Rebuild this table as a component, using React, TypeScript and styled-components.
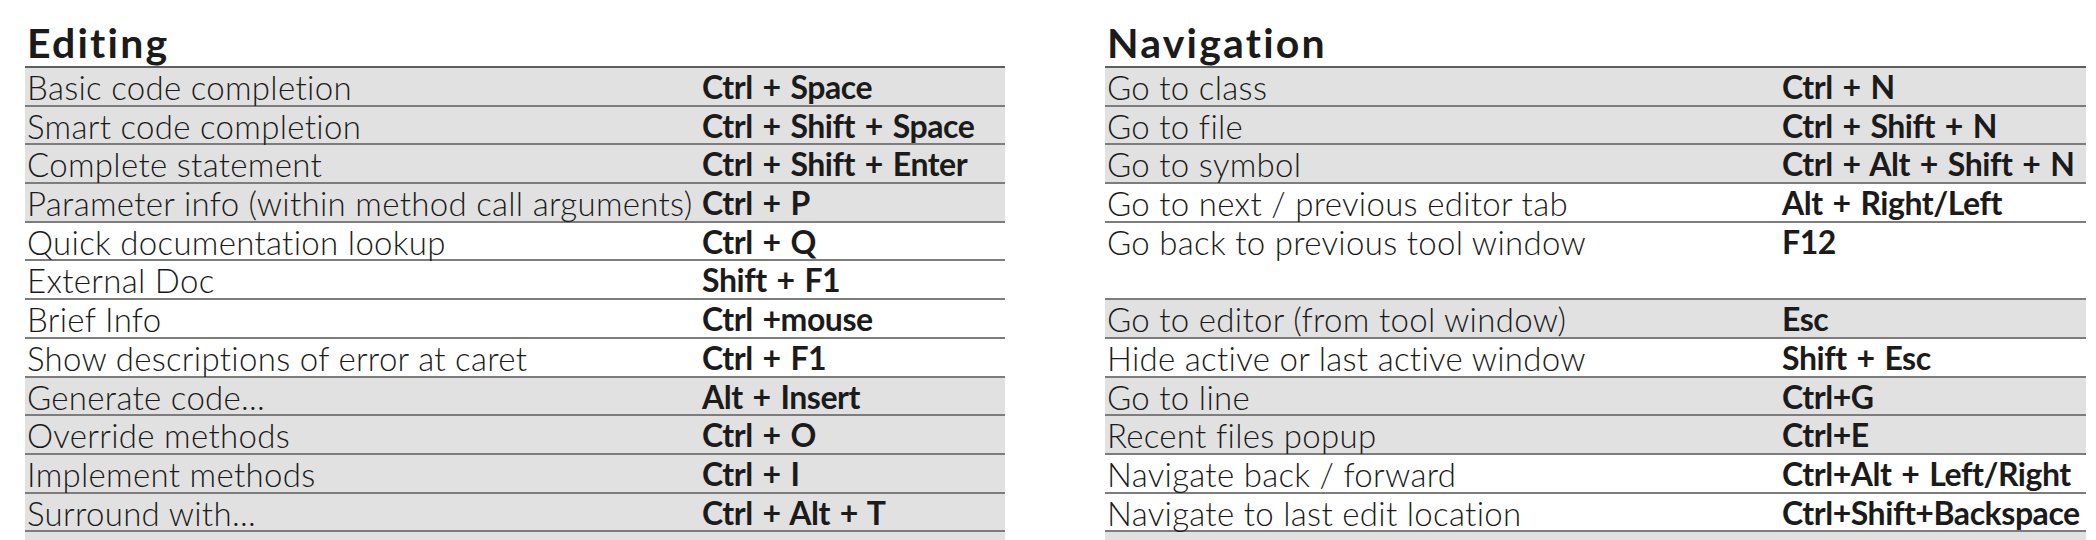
import React from 'react'
import styled, { createGlobalStyle } from 'styled-components'

const GlobalStyle = createGlobalStyle`
  body {
    margin: 0;
    background: #fff;
    color: #1b1b1b;
    font-family: Lato, 'Liberation Sans', sans-serif;
  }
`

const Page = styled.div`
  display: grid;
  grid-template-columns: 980px 981px;
  column-gap: 100px;
  padding-left: 25px;
  height: 540px;
  overflow: hidden;
`

const Section = styled.section`
  display: flex;
  flex-direction: column;
`

const Title = styled.h2`
  margin: 0;
  height: 68px;
  padding: 0 0 3px 2px;
  box-sizing: border-box;
  display: flex;
  align-items: flex-end;

  font-size: 41px;
  font-weight: 700;
  line-height: 1;
  letter-spacing: 2.2px;
  border-bottom: 2px solid #5e5e5e;
`

const Row = styled.div<{ $shaded?: boolean; $line?: boolean }>`
  display: grid;
  grid-template-columns: 675px 1fr;
  height: 38.7px;
  box-sizing: border-box;
  padding-left: 2px;

  background: ${props => (props.$shaded ? '#e1e1e1' : '#fff')};
  border-bottom: 2px solid ${props => (props.$line ? '#7d7d7d' : 'transparent')};
`

const Action = styled.span`
  font-size: 33px;
  font-weight: 300;
  line-height: 38px;
  letter-spacing: 0.3px;
  white-space: nowrap;
`

const Keys = styled.span`
  font-size: 32px;
  font-weight: 700;
  line-height: 38px;
  letter-spacing: -0.45px;
  word-spacing: 2.5px;
  white-space: nowrap;
`

type Shortcut = {
  action: string
  keys: string
  shaded?: boolean
  line?: boolean
}

const editing: Shortcut[] = [
  { action: 'Basic code completion', keys: 'Ctrl + Space', shaded: true },
  { action: 'Smart code completion', keys: 'Ctrl + Shift + Space', shaded: true },
  { action: 'Complete statement', keys: 'Ctrl + Shift + Enter', shaded: true },
  { action: 'Parameter info (within method call arguments)', keys: 'Ctrl + P', shaded: true },
  { action: 'Quick documentation lookup', keys: 'Ctrl + Q' },
  { action: 'External Doc', keys: 'Shift + F1' },
  { action: 'Brief Info', keys: 'Ctrl +mouse' },
  { action: 'Show descriptions of error at caret', keys: 'Ctrl + F1' },
  { action: 'Generate code...', keys: 'Alt + Insert', shaded: true },
  { action: 'Override methods', keys: 'Ctrl + O', shaded: true },
  { action: 'Implement methods', keys: 'Ctrl + I', shaded: true },
  { action: 'Surround with...', keys: 'Ctrl + Alt + T', shaded: true },
  { action: '', keys: '', shaded: true },
]

const navigation: Shortcut[] = [
  { action: 'Go to class', keys: 'Ctrl + N', shaded: true },
  { action: 'Go to file', keys: 'Ctrl + Shift + N', shaded: true },
  { action: 'Go to symbol', keys: 'Ctrl + Alt + Shift + N', shaded: true },
  { action: 'Go to next / previous editor tab', keys: 'Alt + Right/Left' },
  { action: 'Go back to previous tool window', keys: 'F12', line: false },
  { action: '', keys: '' },
  { action: 'Go to editor (from tool window)', keys: 'Esc', shaded: true },
  { action: 'Hide active or last active window', keys: 'Shift + Esc' },
  { action: 'Go to line', keys: 'Ctrl+G', shaded: true },
  { action: 'Recent files popup', keys: 'Ctrl+E', shaded: true },
  { action: 'Navigate back / forward', keys: 'Ctrl+Alt + Left/Right' },
  { action: 'Navigate to last edit location', keys: 'Ctrl+Shift+Backspace' },
  { action: '', keys: '', shaded: true },
]

const ShortcutTable = ({ title, items }: { title: string; items: Shortcut[] }) => (
  <Section>
    <Title>{title}</Title>
    {items.map((item, i) => (
      <Row key={i} $shaded={item.shaded} $line={item.line !== false}>
        <Action>{item.action}</Action>
        <Keys>{item.keys}</Keys>
      </Row>
    ))}
  </Section>
)

export default function App() {
  return (
    <>
      <GlobalStyle />
      <Page>
        <ShortcutTable title="Editing" items={editing} />
        <ShortcutTable title="Navigation" items={navigation} />
      </Page>
    </>
  )
}
